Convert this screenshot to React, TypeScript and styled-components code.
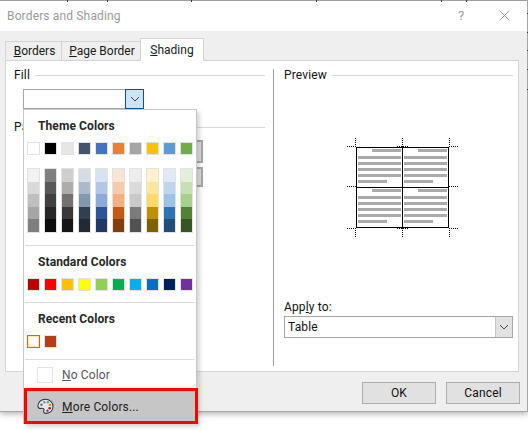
import React from "react";
import styled, { createGlobalStyle } from "styled-components";

const Global = createGlobalStyle`
  html, body { margin: 0; padding: 0; background: #fff; }
  body { font-family: Roboto, "Noto Sans", sans-serif; font-size: 12px; color: #1a1a1a; }
  * { box-sizing: border-box; }
`;

const Page = styled.div`
  width: 528px;
  height: 430px;
  overflow: hidden;
  background: #fff;
`;
const Dialog = styled.div`
  position: relative;
  width: 528px;
  height: 412px;
  background: #efefef;
  border-right: 1px solid #a6a6a6;
  border-bottom: 1px solid #a6a6a6;
  box-shadow: 0 2px 6px rgba(0, 0, 0, 0.3);
`;
const RulerTicks = styled.svg`
  position: absolute;
  left: 0;
  top: 0;
  width: 528px;
  height: 100px;
  z-index: 3;
  pointer-events: none;
`;
const TitleBar = styled.div`
  height: 31px;
  background: #fff;
  border-top: 1px solid #a0a0a0;
  display: flex;
  align-items: center;
  padding: 0 0 1px 7px;
`;
const Title = styled.div`
  flex: 1;
  color: #9a9a9a;
  font-size: 12px;
  letter-spacing: 0.15px;
`;
const Help = styled.div`
  width: 12px;
  margin-right: 32px;
  text-align: center;
  color: #999;
  font-size: 13px;
`;
const CloseIcon = styled.svg`
  width: 11px;
  height: 11px;
  margin-right: 17px;
`;
const Tabs = styled.div`
  height: 30px;
  padding-left: 5px;
  display: flex;
  align-items: flex-end;
  position: relative;
  z-index: 1;
  margin-bottom: -1px;
`;
const Tab = styled.div<{ $active?: boolean; $w: number }>`
  width: ${(p) => p.$w}px;
  height: ${(p) => (p.$active ? 23 : 20)}px;
  padding-left: ${(p) => (p.$active ? 0 : 2)}px;
  background: ${(p) => (p.$active ? "#fff" : "#efefef")};
  border: 1px solid #d4d4d4;
  border-right-width: ${(p) => (p.$active ? 1 : 0)}px;
  border-bottom-color: ${(p) => (p.$active ? "#fff" : "#d4d4d4")};
  display: flex;
  align-items: center;
  justify-content: center;
  font-size: 12px;
`;
const Panel = styled.div`
  margin-left: 5px;
  width: 514px;
  height: 312px;
  background: #fff;
  border: 1px solid #d4d4d4;
  display: flex;
`;
const LeftPane = styled.div`
  width: 267px;
  padding: 6px 8px 0 8px;
`;
const Divider = styled.div`
  width: 1px;
  margin: 8px 0 5px;
  background: #a0a0a0;
`;
const RightPane = styled.div`
  flex: 1;
  padding: 6px 5px 0 10px;
`;
const Legend = styled.div<{ $top?: number }>`
  height: 16px;
  margin-top: ${(p) => p.$top ?? 0}px;
  display: flex;
  align-items: center;
  gap: 5px;
  font-size: 12px;
  letter-spacing: 0.15px;
  color: #111;
  &::after {
    content: "";
    flex: 1;
    height: 1px;
    background: #d9d9d9;
  }
`;
const Combo = styled.div`
  margin: 6px 0 0 9px;
  width: 121px;
  height: 20px;
  border: 1px solid #a6a6a6;
  display: flex;
  justify-content: flex-end;
`;
const ComboButton = styled.div<{ $hot?: boolean; $w: number }>`
  width: ${(p) => p.$w}px;
  margin: ${(p) => (p.$hot ? "-1px" : "0")};
  background: ${(p) => (p.$hot ? "#cce4f7" : "#e1e1e1")};
  border: ${(p) => (p.$hot ? "1px solid #005499" : "none")};
  border-left: 1px solid ${(p) => (p.$hot ? "#005499" : "#c4c4c4")};
  display: flex;
  align-items: center;
  justify-content: center;
`;
const Chevron = () => (
  <svg width="10" height="6" viewBox="0 0 10 6">
    <path d="M1 1l4 4 4-4" fill="none" stroke="#444" strokeWidth="1" />
  </svg>
);
const StubField = styled.div<{ $h: number; $top: number }>`
  margin: ${(p) => p.$top}px 0 0 86px;
  width: 103px;
  height: ${(p) => p.$h}px;
  background: #e1e1e1;
  border: 2px solid #a8a8a8;
  border-left: none;
`;
const PreviewArt = styled.svg`
  display: block;
  margin: 46px 0 0 56px;
  width: 130px;
  height: 116px;
`;
const ApplyLabel = styled.div`
  margin-top: 54px;
  height: 16px;
  line-height: 16px;
  font-size: 12px;
  letter-spacing: 0.15px;
  color: #111;
`;
const Select = styled.div`
  margin-top: 1px;
  height: 22px;
  border: 1px solid #a6a6a6;
  display: flex;
  justify-content: space-between;
`;
const SelectText = styled.div`
  padding-left: 3px;
  line-height: 20px;
  font-size: 12px;
  letter-spacing: 0.15px;
  color: #111;
`;
const Footer = styled.div`
  display: flex;
  justify-content: flex-end;
  gap: 10px;
  padding: 10px 7px 0 0;
`;
const Button = styled.div`
  width: 74px;
  height: 22px;
  border: 1px solid #adadad;
  background: #e1e1e1;
  display: flex;
  align-items: center;
  justify-content: center;
  font-size: 12px;
  letter-spacing: 0.15px;
  color: #111;
`;

const Menu = styled.div`
  position: absolute;
  left: 23px;
  top: 109px;
  width: 174px;
  height: 315px;
  background: #fff;
  border: 1px solid #c6c6c6;
  border-bottom: none;
  box-shadow: 3px 3px 4px rgba(0, 0, 0, 0.16);
  z-index: 2;
`;
const MenuHeading = styled.div`
  height: 32px;
  line-height: 33px;
  padding-left: 14px;
  font-size: 12px;
  font-weight: 700;
  letter-spacing: 0.1px;
  color: #262626;
`;
const SwatchRow = styled.div`
  display: flex;
  gap: 4px;
  padding-left: 3px;
`;
const Swatch = styled.div<{ $c: string; $recent?: boolean }>`
  width: 13px;
  height: 13px;
  background: ${(p) => p.$c};
  border: 1px solid ${(p) => (p.$recent ? "#e2601f" : "#e2e2e2")};
  outline: ${(p) => (p.$recent ? "1px solid #ffe9a8" : "none")};
  outline-offset: -2px;
`;
const ShadeGrid = styled(SwatchRow)`
  margin-top: 13px;
`;
const ShadeColumn = styled.div`
  width: 13px;
  height: 65px;
  border: 1px solid #e2e2e2;
  display: flex;
  flex-direction: column;
`;
const Shade = styled.div<{ $c: string }>`
  flex: 1;
  background: ${(p) => p.$c};
`;
const Sep = styled.div<{ $top: number }>`
  height: 1px;
  margin: ${(p) => p.$top}px 1px 0;
  background: #dcdcdc;
`;
const NoColorRow = styled.div`
  height: 28px;
  display: flex;
  align-items: center;
  padding: 1px 0 0 13px;
  gap: 9px;
  color: #555;
  font-size: 12px;
  letter-spacing: 0.15px;
`;
const EmptyBox = styled.div`
  width: 16px;
  height: 16px;
  border: 1px solid #e2e2e2;
`;
const MoreRow = styled.div`
  width: 174px;
  height: 36px;
  margin-right: -1px;
  border: 3px solid #f00;
  background: #c6c6c6;
  display: flex;
  align-items: center;
  padding: 1px 0 0 10px;
  gap: 8px;
  font-size: 12px;
  letter-spacing: 0.15px;
  color: #222;
`;

const theme = ["#ffffff", "#000000", "#e7e6e6", "#44546a", "#4472c4", "#ed7d31", "#a5a5a5", "#ffc000", "#5b9bd5", "#70ad47"];
const shades = [
  ["#f2f2f2", "#d9d9d9", "#bfbfbf", "#a6a6a6", "#7f7f7f"],
  ["#7f7f7f", "#595959", "#404040", "#262626", "#0d0d0d"],
  ["#d0cece", "#aeabab", "#757070", "#3a3838", "#171616"],
  ["#d6dce4", "#adb9ca", "#8497b0", "#323f4f", "#222b35"],
  ["#d9e2f3", "#b4c6e7", "#8eaadb", "#2f5496", "#1f3864"],
  ["#fbe4d5", "#f7caac", "#f4b083", "#c45911", "#833c0b"],
  ["#ededed", "#dbdbdb", "#c9c9c9", "#7b7b7b", "#525252"],
  ["#fff2cc", "#ffe599", "#ffd966", "#bf8f00", "#7f6000"],
  ["#deeaf6", "#bdd6ee", "#9cc2e5", "#2e74b5", "#1f4e79"],
  ["#e2efd9", "#c5e0b3", "#a8d08d", "#538135", "#385623"],
];
const standard = ["#c00000", "#ff0000", "#ffc000", "#ffff00", "#92d050", "#00b050", "#00b0f0", "#0070c0", "#002060", "#7030a0"];
const topTicks = [67, 107, 191, 316, 441, 466];
const sideTicks = [13, 32, 50, 69, 89];

const cellBars = (x: number, y: number, key: string) => {
  const ys = [2, 9, 15, 21, 27, 33];
  return ys.map((d, i) => {
    const left = i === 0 ? x + 14 : x;
    const w = i === 0 ? 29 : i === 5 ? 29 : 43;
    return <rect key={key + i} x={left} y={y + d} width={w} height={3} fill="#aaa" />;
  });
};

const Preview = () => (
  <PreviewArt viewBox="0 0 130 116">
    {cellBars(18, 18, "a")}
    {cellBars(64, 18, "b")}
    {cellBars(18, 58, "c")}
    {cellBars(64, 58, "d")}
    <g fill="none" stroke="#000" strokeWidth="1">
      <rect x="16.5" y="18.5" width="92" height="80" />
      <path d="M62.5 18v81M16 58.5h93" />
    </g>
    <g fill="none" stroke="#000" strokeWidth="1" strokeDasharray="1 1">
      <path d="M15.5 9v9M62.5 9v9M109.5 9v9M15.5 99v9M62.5 99v9M109.5 99v9" />
      <path d="M7 17.5h9M57 17.5h11M109 17.5h9M7 57.500h9M109 57.500h9M7 99.500h9M57 99.500h11M109 99.500h9" />
    </g>
  </PreviewArt>
);

const Palette = () => (
  <svg width="17" height="17" viewBox="0 0 17 17">
    <path
      d="M8.5 1.2C4.2 1.2 1 4 1 8c0 2 1.4 2.6 2.8 2.4 1.6-.2 3-.3 3.2 1 .2 1-.6 1.6-.3 2.6.3.9 1.3 1.5 2.6 1.4 3.8-.3 6.700-3 6.700-7 0-4-3.300-7.200-7.500-7.200z"
      fill="#e8e8e8"
      stroke="#333"
      strokeWidth="1.1"
    />
    <circle cx="4.500" cy="6.800" r="1.200" fill="#4472c4" />
    <circle cx="7.300" cy="4.300" r="1.200" fill="#5b9bd5" />
    <circle cx="10.800" cy="4.300" r="1.200" fill="#70ad47" />
    <circle cx="13" cy="7" r="1.200" fill="#ed7d31" />
    <circle cx="12.700" cy="10.300" r="1.200" fill="#c00000" />
    <circle cx="10.500" cy="12.800" r="1.200" fill="#7030a0" />
  </svg>
);

export default function App() {
  return (
    <Page>
      <Global />
      <Dialog>
        <RulerTicks viewBox="0 0 528 100">
          {topTicks.map((x) => <rect key={x} x={x} y={0} width={1} height={2} fill="#333" />)}
          {sideTicks.map((y) => <rect key={y} x={527} y={y} width={1} height={1} fill="#333" />)}
        </RulerTicks>
        <TitleBar>
          <Title>Borders and Shading</Title>
          <Help>?</Help>
          <CloseIcon viewBox="0 0 11 11">
            <path d="M.5.5l10 10M10.500.5l-10 10" stroke="#999" strokeWidth="1" fill="none" />
          </CloseIcon>
        </TitleBar>
        <Tabs>
          <Tab $w={56}><span><u>B</u>orders</span></Tab>
          <Tab $w={79}><span><u>P</u>age Border</span></Tab>
          <Tab $w={64} $active><span><u>S</u>hading</span></Tab>
        </Tabs>
        <Panel>
          <LeftPane>
            <Legend>Fill</Legend>
            <Combo>
              <ComboButton $hot $w={19}><Chevron /></ComboButton>
            </Combo>
            <Legend $top={10}>Pa</Legend>
            <StubField $top={5} $h={23} />
            <StubField $top={4} $h={20} />
          </LeftPane>
          <Divider />
          <RightPane>
            <Legend>Preview</Legend>
            <Preview />
            <ApplyLabel>App<u>l</u>y to:</ApplyLabel>
            <Select>
              <SelectText>Table</SelectText>
              <ComboButton $w={17}><Chevron /></ComboButton>
            </Select>
          </RightPane>
        </Panel>
        <Footer>
          <Button>OK</Button>
          <Button>Cancel</Button>
        </Footer>
        <Menu>
          <MenuHeading>Theme Colors</MenuHeading>
          <SwatchRow>
            {theme.map((c) => <Swatch key={c} $c={c} />)}
          </SwatchRow>
          <ShadeGrid>
            {shades.map((col) => (
              <ShadeColumn key={col[0] + col[4]}>
                {col.map((c) => <Shade key={c} $c={c} />)}
              </ShadeColumn>
            ))}
          </ShadeGrid>
          <Sep $top={12} />
          <MenuHeading>Standard Colors</MenuHeading>
          <SwatchRow>
            {standard.map((c) => <Swatch key={c} $c={c} />)}
          </SwatchRow>
          <Sep $top={11} />
          <MenuHeading>Recent Colors</MenuHeading>
          <SwatchRow>
            <Swatch $c="#fffdf5" $recent />
            <Swatch $c="#b33f15" />
          </SwatchRow>
          <Sep $top={11} />
          <NoColorRow>
            <EmptyBox />
            <span><u>N</u>o Color</span>
          </NoColorRow>
          <MoreRow>
            <Palette />
            <span><u>M</u>ore Colors...</span>
          </MoreRow>
        </Menu>
      </Dialog>
    </Page>
  );
}
